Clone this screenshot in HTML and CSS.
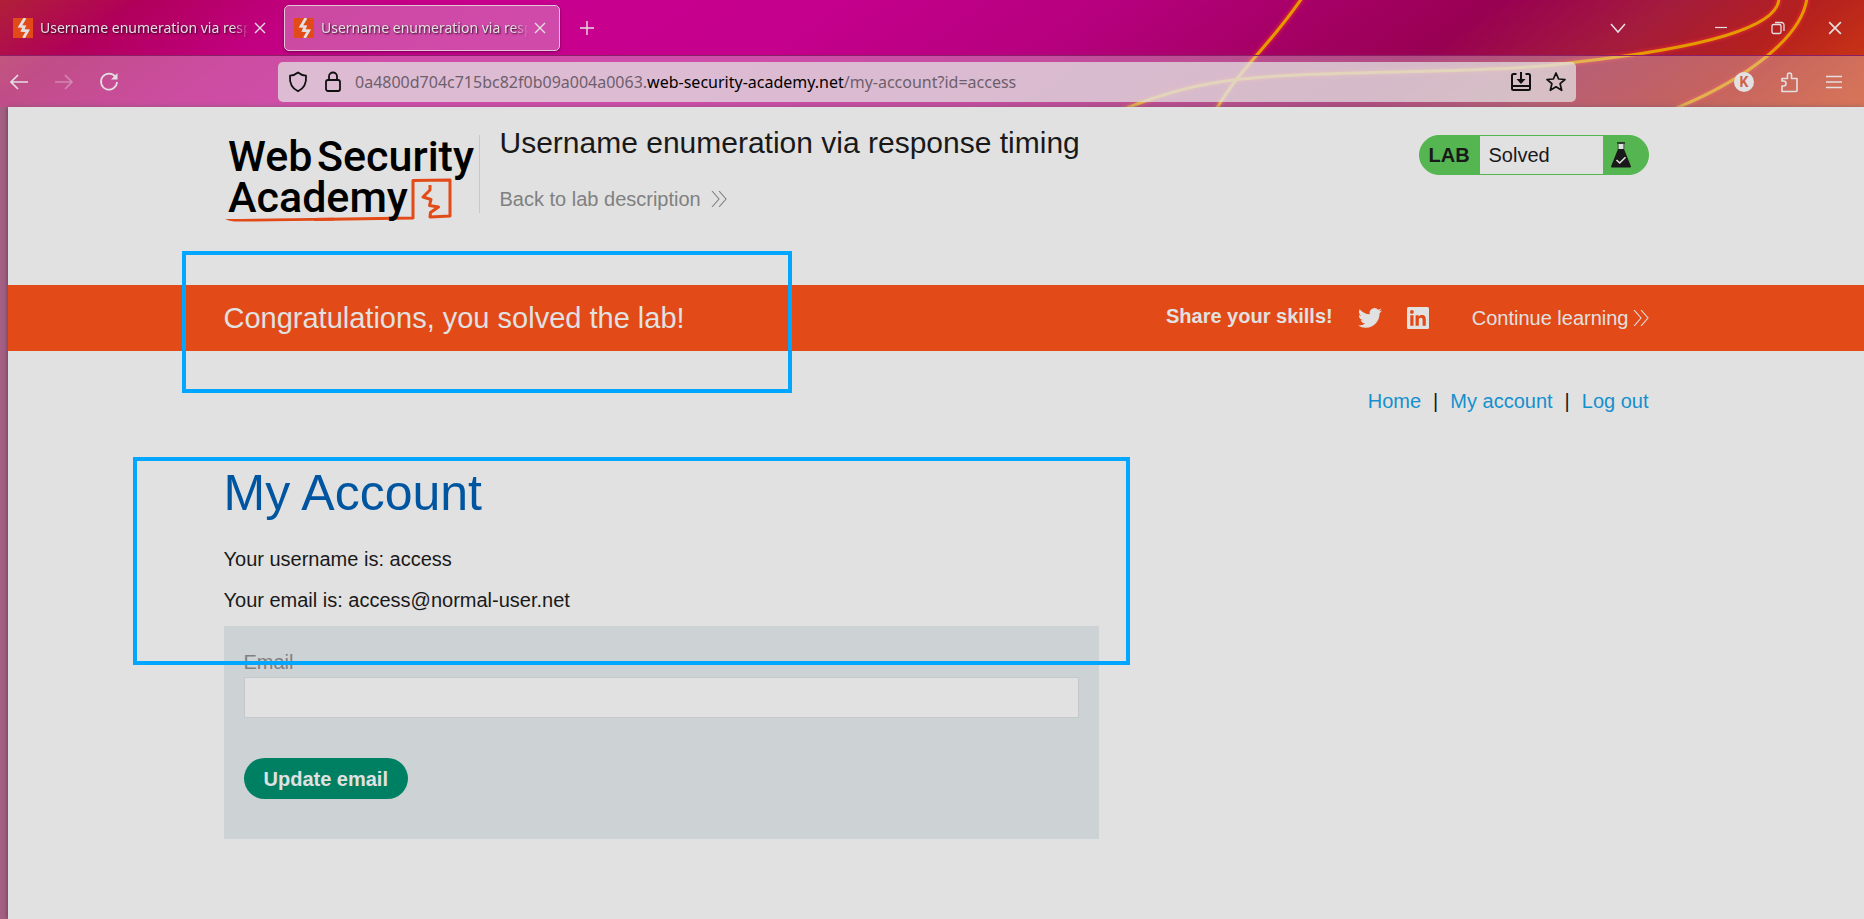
FILE: index.html
```html
<!DOCTYPE html>
<html lang="en">
<head>
<meta charset="utf-8">
<title>Username enumeration via response timing</title>
<link rel="stylesheet" href="styles.css">
</head>
<body>
<svg class="sprite" aria-hidden="true">
  <symbol id="bolt" viewBox="0 0 20 20"><rect width="20" height="20" fill="#e24a17"/><path d="M12 0L7 8.300l4.200.4L9.500 12.400l5.200.4L10.500 20" fill="none" stroke="#e4e0e0" stroke-width="2.800"/></symbol>
  <symbol id="cross" viewBox="0 0 12 12"><path d="M1 1l10 10M11 1L1 11" fill="none" stroke="currentColor" stroke-width="1.4"/></symbol>
  <symbol id="next" viewBox="0 0 16 16"><path d="M1 0l7 8-7 8M8 0l7 8-7 8" fill="none" stroke="currentColor" stroke-width="1.1"/></symbol>
</svg>
<header class="browser">
  <svg class="wallpaper" viewBox="0 0 1864 107" preserveAspectRatio="none" aria-hidden="true">
    <defs>
      <linearGradient id="sky" gradientUnits="userSpaceOnUse" x1="0" y1="0" x2="677" y2="946">
        <stop offset="0" stop-color="#b02038"/><stop offset=".07" stop-color="#b0005a"/><stop offset=".16" stop-color="#c20082"/><stop offset=".26" stop-color="#c9008f"/><stop offset=".42" stop-color="#c4008c"/><stop offset=".56" stop-color="#b6007e"/><stop offset=".75" stop-color="#980052"/><stop offset=".84" stop-color="#a41c3c"/><stop offset=".91" stop-color="#b4201e"/><stop offset="1" stop-color="#d03c12"/>
      </linearGradient>
      <filter id="glow" x="-5%" y="-20%" width="110%" height="140%"><feGaussianBlur stdDeviation="1.6"/></filter>
    </defs>
    <rect width="1864" height="107" fill="url(#sky)"/>
    <g fill="none" stroke="#e22a2a" stroke-width="6" opacity=".7" filter="url(#glow)">
      <path d="M1302-2Q1284 24 1256 56T1216 110"/><path d="M1122 110Q1180 86 1234 80C1320 69 1490 75 1577 62C1700 48 1779 28 1779-2"/><path d="M1672 110C1750 78 1802 36 1807-2"/>
    </g>
    <g fill="none" stroke="#e59a00" stroke-width="3">
      <path d="M1302-2Q1284 24 1256 56T1216 110"/><path d="M1122 110Q1180 86 1234 80C1320 69 1490 75 1577 62C1700 48 1779 28 1779-2"/><path d="M1672 110C1750 78 1802 36 1807-2"/>
    </g>
  </svg>
  <div class="tabs">
    <div class="tab"><svg class="favicon"><use href="#bolt"/></svg><span class="tab-title">Username enumeration via response timing</span><button class="icon-button" aria-label="Close tab"><svg class="close"><use href="#cross"/></svg></button></div>
    <div class="tab tab-active"><svg class="favicon"><use href="#bolt"/></svg><span class="tab-title">Username enumeration via response timing</span><button class="icon-button" aria-label="Close tab"><svg class="close"><use href="#cross"/></svg></button></div>
    <button class="icon-button new-tab" aria-label="New tab"><svg width="16" height="16" viewBox="0 0 16 16"><path d="M8 1v14M1 8h14" stroke="currentColor" stroke-width="1.4"/></svg></button>
    <div class="window-controls">
      <button class="icon-button list-tabs" aria-label="List all tabs"><svg width="16" height="16" viewBox="0 0 16 16"><path d="M1 4l7 8 7-8" fill="none" stroke="currentColor" stroke-width="1.5"/></svg></button>
      <button class="icon-button" aria-label="Minimise"><svg width="14" height="14" viewBox="0 0 14 14"><path d="M1 6.500h12" stroke="currentColor" stroke-width="1.2"/></svg></button>
      <button class="icon-button" aria-label="Restore"><svg width="14" height="14" viewBox="0 0 14 14"><g fill="none" stroke="currentColor" stroke-width="1.3"><rect x="1" y="3.500" width="9" height="9" rx="1.500"/><path d="M4 1.500h6.500a2.500 2.500 0 0 1 2.500 2.500v6"/></g></svg></button>
      <button class="icon-button" aria-label="Close window"><svg width="14" height="14" viewBox="0 0 12 12"><use href="#cross"/></svg></button>
    </div>
  </div>
  <div class="toolbar">
    <div class="nav-buttons">
      <button class="icon-button" aria-label="Back"><svg width="20" height="20" viewBox="0 0 20 20"><path d="M19 10H2M9 3l-7 7 7 7" fill="none" stroke="currentColor" stroke-width="1.7"/></svg></button>
      <button class="icon-button dim" aria-label="Forward"><svg width="20" height="20" viewBox="0 0 20 20"><path d="M1 10h17M11 3l7 7-7 7" fill="none" stroke="currentColor" stroke-width="1.7"/></svg></button>
      <button class="icon-button" aria-label="Reload"><svg width="20" height="20" viewBox="0 0 20 20"><path d="M16.500 5A8 8 0 1 0 18 10" fill="none" stroke="currentColor" stroke-width="1.7"/><path d="M18.500 1v6.500H12z" fill="currentColor"/></svg></button>
    </div>
    <div class="address">
      <svg width="20" height="22" viewBox="0 0 20 22"><path d="M10 1.500c2.400 2 5 3 8 3.200.6 7-1.400 12.600-8 15.600C3.400 17.300 1.400 11.700 2 4.700c3-.2 5.600-1.200 8-3.200z" fill="none" stroke="currentColor" stroke-width="1.8" stroke-linejoin="round"/></svg>
      <svg class="lock" width="16" height="22" viewBox="0 0 16 22"><g fill="none" stroke="currentColor" stroke-width="1.8"><rect x="1" y="9" width="14" height="11" rx="2"/><path d="M4 9V5.500a4 4 0 0 1 8 0V9"/></g></svg>
      <span class="url">0a4800d704c715bc82f0b09a004a0063.<b>web-security-academy.net</b>/my-account?id=access</span>
      <button class="icon-button dark" aria-label="Save page"><svg width="22" height="20" viewBox="0 0 22 20"><g fill="none" stroke="currentColor" stroke-width="2"><path d="M6.500 2H3.500A1.500 1.500 0 0 0 2 3.500v13A1.500 1.500 0 0 0 3.500 18h15a1.500 1.500 0 0 0 1.500-1.500v-13A1.500 1.500 0 0 0 18.500 2h-3M2 14h18M11 0v9"/></g><path d="M6.500 7h9L11 12z" fill="currentColor"/></svg></button>
      <button class="icon-button dark" aria-label="Bookmark"><svg width="22" height="22" viewBox="0 0 22 22"><path d="M11 2l2.600 6 6.400.5-4.900 4.200 1.600 6.600L11 15.800l-5.700 3.500 1.600-6.600L2 8.500 8.400 8z" fill="none" stroke="currentColor" stroke-width="1.700" stroke-linejoin="round"/></svg></button>
    </div>
    <div class="extensions">
      <button class="icon-button avatar">K</button>
      <button class="icon-button" aria-label="Extensions"><svg width="20" height="22" viewBox="0 0 20 22"><path d="M2 20.500V15h1.500a2.500 2.500 0 0 0 0-5H2V7.500h5.500V4a2 2 0 0 1 4 0v3.500H17v12a1 1 0 0 1-1 1z" fill="none" stroke="currentColor" stroke-width="1.600" stroke-linejoin="round"/></svg></button>
      <button class="icon-button" aria-label="Menu"><svg width="16" height="14" viewBox="0 0 16 14"><path d="M0 1.500h16M0 7h16M0 12.500h16" stroke="currentColor" stroke-width="1.500"/></svg></button>
    </div>
  </div>
</header>
<main class="page">
  <header class="lab-header container">
    <a class="logo" href="#" aria-label="Web Security Academy">
      <svg width="255" height="98" viewBox="0 0 255 98">
        <path d="M90 90.500L189 89V51.500L226 51V87L206 88L206.500 83.500L214.500 78L205.500 76.500L207 70.500L199 68L206 61V56" fill="none" stroke="#e24a17" stroke-width="3" stroke-linejoin="round"/>
        <path d="M1 90Q50 89.500 110 88.800V91.500Q50 92.500 10 92.500Q4 91.500 1 90z" fill="#e24a17"/>
        <text class="logo-text" x="4" y="42">Web</text><text class="logo-text" x="93" y="42">Security</text><text class="logo-text" x="4" y="83">Academy</text>
      </svg>
    </a>
    <div class="divider"></div>
    <div class="lab-title">
      <h2>Username enumeration via response timing</h2>
      <a class="back" href="#">Back to lab description <svg class="next"><use href="#next"/></svg></a>
    </div>
    <div class="status">
      <strong>LAB</strong><span class="status-text">Solved</span>
      <svg class="flask" width="20" height="26" viewBox="0 0 20 26"><path d="M6 1h8" stroke="#191919" stroke-width="1.600"/><path d="M7.500 2h5v5h-5z" fill="#e1e1e1"/><path d="M7 1v6M13 1v6" stroke="#555" /><path d="M7 7h6l7 17.500q0 1-1 1H1q-1 0-1-1z" fill="#191919"/><path d="M5.500 18l3.200 3 5.800-5.800" fill="none" stroke="#e1e1e1" stroke-width="1.600"/></svg>
    </div>
  </header>
  <section class="banner">
    <div class="container banner-inner">
      <h4>Congratulations, you solved the lab!</h4>
      <span class="share">Share your skills!</span>
      <a class="social" href="#" aria-label="Twitter"><svg width="24" height="24" viewBox="0 0 24 24"><path fill="currentColor" d="M23.950 4.570a10 10 0 0 1-2.820.77 4.960 4.960 0 0 0 2.160-2.720c-.95.560-2 .960-3.120 1.190a4.920 4.920 0 0 0-8.390 4.480C7.690 8.090 4.070 6.130 1.640 3.160a4.820 4.820 0 0 0-.67 2.480c0 1.710.87 3.210 2.190 4.100a4.900 4.900 0 0 1-2.230-.62v.06a4.920 4.920 0 0 0 3.950 4.830 5 5 0 0 1-2.210.08 4.940 4.940 0 0 0 4.600 3.420A9.870 9.870 0 0 1 0 19.540a13.990 13.990 0 0 0 7.560 2.210c9.050 0 14-7.500 14-13.980 0-.21 0-.42-.02-.63a9.940 9.940 0 0 0 2.460-2.550z"/></svg></a>
      <a class="social" href="#" aria-label="LinkedIn"><svg width="22" height="22" viewBox="0 0 22 22"><rect width="22" height="22" rx="1.500" fill="currentColor"/><path fill="#e24a17" d="M3.300 8.300h3.200v10.400H3.300zM8.600 8.300h3.100v1.400c.6-1 1.700-1.700 3.200-1.700 3.100 0 3.900 2 3.900 4.800v5.900h-3.200v-5.200c0-1.400-.2-2.700-1.800-2.700-1.500 0-2 1.100-2 2.600v5.300H8.600z"/><circle cx="4.900" cy="4.900" r="1.900" fill="#e24a17"/></svg></a>
      <a class="continue" href="#">Continue learning <svg class="next"><use href="#next"/></svg></a>
      <div class="highlight highlight-banner"></div>
    </div>
  </section>
  <div class="container">
    <nav class="links"><a href="#">Home</a><span>|</span><a href="#">My account</a><span>|</span><a href="#">Log out</a></nav>
    <section class="account">
      <h1>My Account</h1>
      <p>Your username is: access</p>
      <p>Your email is: access@normal-user.net</p>
      <form class="email-form">
        <label for="email">Email</label>
        <input id="email" type="email">
        <button type="button">Update email</button>
      </form>
      <div class="highlight highlight-account"></div>
    </section>
  </div>
</main>
</body>
</html>
```
FILE: styles.css
```css
* { box-sizing: border-box; }
body {
  margin: 0;
  min-height: 100vh;
  display: flex;
  flex-direction: column;
  background: #a46084;
  font-family: "Liberation Sans", Arial, sans-serif;
  font-size: 20px;
  line-height: 24px;
  color: #191919;
}
h1, h2, h4, p { margin: 0; font-weight: 400; }
a { color: inherit; text-decoration: none; }
svg { display: block; flex: none; }
.sprite { position: absolute; width: 0; height: 0; }

.browser {
  position: relative;
  font-family: "Noto Sans", "Open Sans", sans-serif;
  color: #e4e0e2;
}
.wallpaper { position: absolute; top: 0; left: 0; width: 100%; height: 100%; z-index: -1; }
.icon-button {
  display: flex;
  align-items: center;
  justify-content: center;
  flex: none;
  padding: 0;
  border: 0;
  background: none;
  color: inherit;
}
.tabs { display: flex; align-items: center; height: 56px; border-bottom: 1px solid #8a2068; padding-right: 22px; }
.tab {
  display: flex;
  align-items: center;
  width: 276px;
  height: 46px;
  margin-right: 4px;
  padding: 0 13px 0 9px;
  border: 1px solid transparent;
  border-radius: 5px;
}
.tab:first-child { margin-left: 3px; }
.tab:first-child { width: 277px; }
.tab-active { border-color: #e6c4dc; background: rgba(225, 225, 225, .33); box-shadow: 0 1px 3px rgba(60, 0, 40, .6); }
.favicon { width: 20px; height: 20px; }
.tab-title {
  flex: 1;
  margin: 0 5px 0 7px;
  overflow: hidden;
  white-space: nowrap;
  font-size: 14px;
  text-shadow: 1px 1px 2px #300020;
  mask-image: linear-gradient(to right, #000 92%, transparent);
}
.close { width: 12px; height: 12px; }
.new-tab { margin-left: 15px; }
.window-controls { display: flex; align-items: center; margin-left: auto; gap: 43px; }
.list-tabs { margin-right: 45px; }

.toolbar {
  display: flex;
  align-items: center;
  height: 51px;
  padding: 0 22px 0 9px;
  background: rgba(225, 225, 225, .34);
}
.nav-buttons { display: flex; gap: 25px; width: 269px; }
.dim { opacity: .4; }
.address {
  display: flex;
  align-items: center;
  flex: 1;
  height: 40px;
  padding: 0 9px 0 10px;
  border-radius: 5px;
  background: rgba(225, 225, 225, .74);
  color: #101010;
}
.lock { margin-left: 17px; }
.url { flex: 1; margin-left: 14px; font-size: 16px; color: #6d5f6c; white-space: nowrap; }
.url b { font-weight: 400; color: #000; }
.dark { margin-left: 13px; }
.extensions { display: flex; align-items: center; justify-content: flex-end; width: 266px; gap: 26px; }
.avatar { width: 20px; height: 20px; border-radius: 50%; background: #e1e1e1; color: #d0604c; font: 700 14px/20px Roboto, sans-serif; }

.page { flex: 1; margin-left: 8px; background: #e1e1e1; box-shadow: 0 0 5px rgba(50, 20, 40, .6); }
.container { width: 77%; max-width: 1425px; margin: 0 auto; }
.lab-header { display: flex; align-items: flex-start; height: 178px; padding-top: 18px; }
.logo { margin-top: 4px; }
.logo-text { font-family: Roboto, sans-serif; font-size: 43px; font-weight: 500; fill: #000; }
.divider { width: 1px; height: 78px; margin: 10px 20px 0 0; background: #c8c8c8; }
.lab-title h2 { margin-bottom: 26px; font-size: 30px; line-height: 36px; }
.back { display: flex; align-items: center; gap: 10px; color: #808080; }
.next { width: 16px; height: 16px; }
.status {
  display: flex;
  align-items: center;
  width: 230px;
  height: 40px;
  margin: 10px 0 0 auto;
  border: 1px solid #55b651;
  border-radius: 20px;
  background: #55b651;
  overflow: hidden;
}
.status strong { width: 60px; padding-left: 9px; }
.status-text { width: 123px; padding: 7px 9px; background: #e1e1e1; }
.flask { margin-left: 8px; }

.banner { background: #e24a17; color: #e1e1e1; }
.banner-inner { position: relative; display: flex; align-items: center; height: 66px; }
.banner h4 { margin-right: auto; font-size: 29px; line-height: 36px; }
.share { padding-bottom: 4px; font-weight: 700; }
.social { margin-left: 25px; }
.continue { display: flex; align-items: center; gap: 4px; margin-left: 43px; }

.links { display: flex; justify-content: flex-end; gap: 12px; padding: 38px 0 50px; }
.links a { color: #1490cf; }
.account { position: relative; width: 875px; max-width: 100%; }
h1 { margin-bottom: 24px; font-size: 50px; line-height: 60px; color: #0055a0; }
.account p + p { margin-top: 17px; }
.email-form { display: flex; flex-direction: column; align-items: flex-start; margin-top: 14px; padding: 24px 20px 40px; background: #cdd2d4; }
.email-form label { margin-bottom: 3px; color: #808080; }
.email-form input { width: 100%; height: 41px; margin-bottom: 40px; padding: 0 10px; border: 1px solid #c4c8ca; background: #e1e1e1; font: inherit; }
.email-form button { height: 41px; padding: 0 20px; border: 0; border-radius: 21px; background: #008062; color: #e1e1e1; font: inherit; font-weight: 700; }
.highlight { position: absolute; border: 4px solid #00a6ff; pointer-events: none; }
.highlight-banner { top: -34px; left: -42px; width: 610px; height: 142px; }
.highlight-account { top: -6px; left: -91px; width: 997px; height: 208px; }
```
